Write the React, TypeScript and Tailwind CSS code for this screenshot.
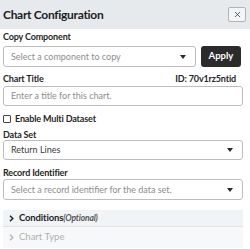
import { X } from "lucide-react";

function Caret() {
  return (
    <svg width="6" height="4" viewBox="0 0 6 4" className="shrink-0">
      <path d="M0 0h6L3 4z" fill="#2a2a2a" />
    </svg>
  );
}

function Chevron({ color }: { color: string }) {
  return (
    <svg width="5" height="7" viewBox="0 0 5 7" className="shrink-0">
      <path d="M1 0.8L3.8 3.5L1 6.2" fill="none" stroke={color} strokeWidth="1.4" />
    </svg>
  );
}

function Select({ text, muted, h }: { text: string; muted?: boolean; h: string }) {
  return (
    <div className={`flex ${h} items-center justify-between rounded-[3px] border border-[#bdbdbd] bg-white pl-[7px] pr-[9px]`}>
      <span className={muted ? "text-[9px] text-[#8d8d8d]" : "text-[9px] text-[#3a3a3a]"}>{text}</span>
      <Caret />
    </div>
  );
}

function Label({ children }: { children: React.ReactNode }) {
  return (
    <div className="text-[9px] font-bold leading-[10px] tracking-[-0.15px] text-[#262626]">{children}</div>
  );
}

export default function App() {
  return (
    <div className="h-[249px] w-[250px] overflow-hidden bg-white font-['Lato',sans-serif] text-[#222]">
      <div className="flex h-[29px] items-center justify-between bg-[#e6eaed] pl-[3px] pr-[4px]">
        <h1 className="text-[12px] font-bold tracking-[-0.3px] text-[#1c1c1c]">Chart Configuration</h1>
        <button className="flex h-[15px] w-[18px] items-center justify-center rounded-[2px] border border-[#b3b3b3] bg-[#f3f5f6]">
          <X size={9} strokeWidth={2} className="text-[#333]" />
        </button>
      </div>

      <div className="flex flex-col pl-[3px] pr-[7px] pt-[3px]">
        <Label>Copy Component</Label>
        <div className="mt-[4px] flex gap-[5px]">
          <div className="flex-1">
            <Select text="Select a component to copy" muted h="h-[21px]" />
          </div>
          <button className="mr-[2px] h-[21px] w-[40px] rounded-[3px] bg-[#2b2b2b] text-[9.5px] font-bold text-white">
            Apply
          </button>
        </div>

        <div className="mt-[7px] flex justify-between pr-[7px]">
          <Label>Chart Title</Label>
          <Label>ID: 70v1rz5ntid</Label>
        </div>
        <div className="mt-[2px] flex h-[20px] items-center rounded-[3px] border border-[#bdbdbd] pl-[7px]">
          <span className="text-[9px] text-[#8d8d8d]">Enter a title for this chart.</span>
        </div>

        <label className="mt-[8px] flex items-center gap-[4px]">
          <span className="h-[8px] w-[8px] rounded-[1px] border border-[#444]" />
          <Label>Enable Multi Dataset</Label>
        </label>

        <div className="mt-[6px]">
          <Label>Data Set</Label>
        </div>
        <Select text="Return Lines" h="h-[20px]" />

        <div className="mt-[8px]">
          <Label>Record Identifier</Label>
        </div>
        <div className="mt-[1px]">
          <Select text="Select a record identifier for the data set." muted h="h-[21px]" />
        </div>
      </div>

      <div className="ml-[3px] mr-[7px] mt-[10px] flex h-[17px] items-center gap-[5px] border-b border-[#e9dfe2] bg-[#f1f4f6] pl-[6px]">
        <Chevron color="#1f1f1f" />
        <span className="text-[9.5px] font-bold tracking-[-0.15px] text-[#1f1f1f]">
          Conditions<span className="text-[8.5px] font-bold italic text-[#555]">(Optional)</span>
        </span>
      </div>
      <div className="ml-[3px] mr-[7px] flex h-[21px] items-center gap-[5px] bg-[#f6f8f9] pl-[6px]">
        <Chevron color="#b5b5b5" />
        <span className="text-[9.5px] text-[#b0b0b0]">Chart Type</span>
      </div>
    </div>
  );
}
